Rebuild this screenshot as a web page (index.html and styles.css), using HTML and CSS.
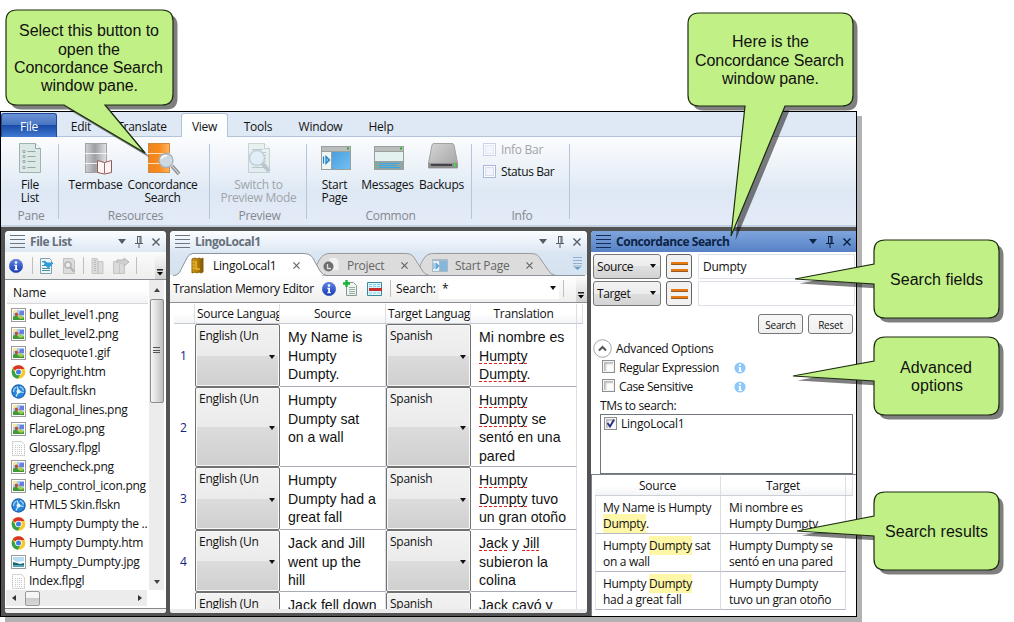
FILE: index.html
```html
<!DOCTYPE html>
<html lang="en">
<head>
<meta charset="utf-8">
<title>Lingo</title>
<link rel="stylesheet" href="styles.css">
</head>
<body>
<svg class="defs" width="0" height="0" aria-hidden="true">
  <defs>
    <linearGradient id="gray" x1="0" x2="1"><stop offset="0" stop-color="#d2d2d5"/><stop offset=".45" stop-color="#9d9ea4"/><stop offset="1" stop-color="#e2e2e6"/></linearGradient>
    <linearGradient id="orange" x1="0" x2="1"><stop offset="0" stop-color="#ee8420"/><stop offset=".5" stop-color="#f98a1c"/><stop offset="1" stop-color="#ffb45e"/></linearGradient>
    <linearGradient id="sky" x1="0" y1="0" x2="1" y2="1"><stop offset="0" stop-color="#4a9fdc"/><stop offset="1" stop-color="#72c0f2"/></linearGradient>
    <linearGradient id="metal" x1="0" x2="1" y2="1"><stop offset="0" stop-color="#d6d6d6"/><stop offset="1" stop-color="#a2a2a2"/></linearGradient>
    <linearGradient id="ball" x1="0" y1="0" x2="0" y2="1"><stop offset="0" stop-color="#5f86e6"/><stop offset="1" stop-color="#1838b0"/></linearGradient>
    <linearGradient id="gold" x1="0" x2="1"><stop offset="0" stop-color="#d09a1a"/><stop offset=".5" stop-color="#b57d0c"/><stop offset="1" stop-color="#7d5306"/></linearGradient>
    <symbol id="pic" viewBox="0 0 15 14"><rect x=".5" y=".5" width="14" height="13" fill="#fff" stroke="#9b9b9b"/><rect x="2" y="2" width="11" height="10" fill="#a9cdf5"/><path d="M2 2h4v3H2z" fill="#f5e9a0"/><path d="M9 3h4v4H8z" fill="#6a7ee0"/><path d="M2 12V9l3-2 3 3 5-1v3z" fill="#3f9a35"/><path d="M4 5l2-.5 1.500 2-1.500 2-2-1z" fill="#c4502a"/><path d="M7 8l3-1 3 3-4 1z" fill="#a5cf3f"/></symbol>
    <symbol id="photo" viewBox="0 0 15 14"><rect x=".5" y=".5" width="14" height="13" fill="#fff" stroke="#9b9b9b"/><rect x="2" y="2" width="11" height="10" fill="#b9dcf5"/><path d="M2 5l4 2 7-1v3H2z" fill="#fff"/><path d="M2 7l4 1 3 1 4-1v2H2z" fill="#22676b"/><path d="M2 10h11v2H2z" fill="#4aa5bd"/></symbol>
    <symbol id="chrome" viewBox="0 0 14 14"><circle cx="7" cy="7" r="6.8" fill="#f7c928"/><path d="M7 7L1.100 3.600A6.800 6.800 0 0 1 13 4H7z" fill="#d93427"/><path d="M1.100 3.600A6.800 6.800 0 0 0 6.200 13.800L9.500 8.500 4.200 8.400z" fill="#2fa34a"/><circle cx="7" cy="7" r="3.300" fill="#fff"/><circle cx="7" cy="7" r="2.500" fill="#3f7de0"/></symbol>
    <symbol id="skin" viewBox="0 0 15 15"><circle cx="7.500" cy="7.500" r="7.200" fill="#1c62b5"/><circle cx="7.500" cy="7.500" r="6" fill="#2a86d8"/><path d="M6 2.500l1.500 4M7.500 7.500l5 1M7.500 7.500L5 12.500" stroke="#d5efff" stroke-width="1.200"/><circle cx="7.500" cy="7.500" r="2" fill="#e8f7ff"/><path d="M2.500 8A5.200 5.200 0 0 1 5 3.300M9 2.700a5 5 0 0 1 3.500 4" stroke="#9bd3f8" stroke-width="1.300" fill="none"/></symbol>
    <symbol id="blank" viewBox="0 0 13 15"><path d="M.5.5h9l3 3v11H.5z" fill="#fdfdfd" stroke="#aaa" stroke-dasharray="1 1"/><path d="M3 4.500h7M3 6.500h7M3 8.500h7M3 10.500h7M3 12.500h7" stroke="#c9c9c9" stroke-dasharray="1 1"/></symbol>
    <symbol id="info" viewBox="0 0 14 14"><circle cx="7" cy="7" r="6.700" fill="url(#ball)" stroke="#3f5fc0" stroke-width=".6"/><circle cx="7" cy="3.500" r="1.300" fill="#fff"/><path d="M5.200 5.800h2.800v4.500h1v1H5.200v-1h1V6.800h-1z" fill="#fff"/></symbol>
    <symbol id="hint" viewBox="0 0 12 12"><circle cx="6" cy="6" r="5.600" fill="#8cc8fb"/><path d="M5 2h2v1.700H5zM4.500 5H7v4h1v1H4.500V9H5V6h-.5z" fill="#fff"/></symbol>
    <symbol id="pin" viewBox="0 0 8 12"><path d="M2 .5h4M2.500 0v7M5 0v7M6 0v7M0 7.500h8M4 8v4" fill="none" stroke="currentColor"/></symbol>
    <symbol id="close" viewBox="0 0 8 8"><path d="M.5.5l7 7M7.500.5l-7 7" stroke="currentColor" stroke-width="1.400"/></symbol>
    <symbol id="overflow" viewBox="0 0 6 7"><path d="M0 .8h6" stroke="#000" stroke-width="1.300"/><path d="M0 3h6L3 6.500z" fill="#000"/></symbol>
    <symbol id="doc" viewBox="0 0 22 30"><path d="M.5.5h16l5 5v24H.5z" fill="#dce8e5" stroke="#9db3af"/><path d="M16.500.5v5h5" fill="#fff" stroke="#8da5a1"/></symbol>
  </defs>
</svg>

<div class="stage">
<main class="window">
  <nav class="tabs">
    <span class="tab file">File</span><span class="tab edit">Edit</span><span class="tab translate">Translate</span><span class="tab view">View</span><span class="tab tools">Tools</span><span class="tab win">Window</span><span class="tab help">Help</span>
  </nav>
  <section class="ribbon">
    <div class="group g-pane">
      <div class="cmds">
        <div class="cmd"><svg width="22" height="30"><use href="#doc" width="22" height="30"/><path d="M8.500 8.500h8M8.500 13.500h8M8.500 18.500h8M8.500 24.500h8" stroke="#93a8a4"/><path d="M4 7.500h2v2H4zM4 12.500h2v2H4zM4 17.500h2v2H4zM4 23.500h2v2H4z" fill="#fff" stroke="#93a8a4"/></svg><span>File<br>List</span></div>
      </div><div class="glabel">Pane</div>
    </div>
    <div class="group g-res">
      <div class="cmds">
        <div class="cmd c-term"><svg width="28" height="32"><rect x=".5" y=".5" width="21" height="29" fill="url(#gray)" stroke="#a3a3a8"/><path d="M0 10.500h22M0 20.500h22" stroke="#f2f2f2"/><path d="M12.500 17.500l7 2 7-2v12l-7 1.500-7-1.500z" fill="#fbf4f2" stroke="#8f5c56"/><path d="M19.500 19.500v11" stroke="#a66"/></svg><span>Termbase</span></div>
        <div class="cmd c-conc"><svg width="33" height="32"><rect x=".5" y=".5" width="21" height="29" fill="url(#orange)" stroke="#d08a40"/><path d="M0 10.500h22M0 20.500h22" stroke="#ffe0b8"/><path d="M24 23l7 8" stroke="#85878a" stroke-width="3.500"/><path d="M24 23l7 8" stroke="#c9cbcd" stroke-width="1.500"/><circle cx="18" cy="17.500" r="7" fill="#c9dced" fill-opacity=".92" stroke="#a8aeb5" stroke-width="1.300"/><path d="M13 16q2-4 6-3" stroke="#fff" fill="none" stroke-width="1.500"/></svg><span>Concordance<br>Search</span></div>
      </div><div class="glabel">Resources</div>
    </div>
    <div class="group g-prev">
      <div class="cmds">
        <div class="cmd off"><svg width="22" height="30"><g opacity=".5"><use href="#doc" width="22" height="30"/><path d="M4 6.500h11M4 9.500h14M4 12.500h14M4 15.500h14M4 18.500h14M4 21.500h14M4 24.500h14" stroke="#849b97"/><path d="M14 20l7 8" stroke="#8a98a5" stroke-width="4"/><circle cx="9" cy="15" r="7.500" fill="#d5e8f4" stroke="#8fa9bd" stroke-width="1.500"/></g></svg><span>Switch to<br>Preview Mode</span></div>
      </div><div class="glabel">Preview</div>
    </div>
    <div class="group g-com">
      <div class="cmds">
        <div class="cmd c-start"><svg width="30" height="30"><rect x="0" y="3" width="30" height="24" fill="#9ba09e"/><rect x="1" y="4" width="28" height="4" fill="#b9bdbb"/><path d="M26 4.500h2v2h-2z" fill="#20b020"/><path d="M1 9h9v17H1z" fill="#edf5f5"/><path d="M11 9h18v17H11z" fill="url(#sky)"/><path d="M2.500 13.500v7M5 13.500l3.500 3.500L5 20.500z" stroke="#2180c5" stroke-width="1.300" fill="#8ccdf4"/></svg><span>Start<br>Page</span></div>
        <div class="cmd c-msg"><svg width="30" height="30"><rect x="0" y="3" width="30" height="24" fill="#9ba09e"/><rect x="1" y="4" width="28" height="4" fill="#b9bdbb"/><path d="M26 4.500h2v2h-2z" fill="#20b020"/><path d="M1 9h28v9H1z" fill="#e3f1ef"/><path d="M1 19h28v7H1z" fill="#8da6a5"/><path d="M5 20.500h20M5 22.500h17M5 24.500h21" stroke="#35a8e5"/><path d="M2 20h1v1H2zM2 22h1v1H2zM2 24h1v1H2z" fill="#40d840"/></svg><span>Messages</span></div>
        <div class="cmd c-back"><svg width="30" height="30"><path d="M6 .5h18q1.500 0 2 1.500l3.500 18v5H.5v-5L4 2q.5-1.500 2-1.500z" fill="url(#metal)" stroke="#a2a2a2"/><path d="M.5 20h29v5H.5z" fill="#8e8e8e"/><path d="M3 21h21v2H3z" fill="#47424b"/><path d="M26 20.500h1.500v3.500H26z" fill="#2cf22c"/></svg><span>Backups</span></div>
      </div><div class="glabel">Common</div>
    </div>
    <div class="group g-info">
      <div class="checks"><label class="off"><i class="rbox"></i>Info Bar</label><label><i class="rbox"></i>Status Bar</label></div>
      <div class="glabel">Info</div>
    </div>
  </section>

  <div class="work">
    <section class="panel files">
      <header class="phead"><i class="grip"></i><b>File List</b><i class="tri"></i><svg class="pin" width="8" height="12"><use href="#pin"/></svg><svg class="x" width="8" height="8"><use href="#close"/></svg></header>
      <div class="ftools">
        <svg width="14" height="14"><use href="#info"/></svg><i class="sep s1"></i>
        <svg width="15" height="16"><path d="M1.500.5h9l2 2v13h-11z" fill="#eef5f5" stroke="#7ba2b0"/><path d="M3 7.500h7M3 10.500h8M3 12.500h8" stroke="#4d8fa8"/><path d="M3 3.500q4-1 5 1.500h6l-4.500 5L5 6h2Q6 4 3 3.500z" fill="#2f9bdb" stroke="#2f9bdb"/></svg>
        <svg class="g2" width="14" height="16"><path d="M1.500.5h9l2 2v13h-11z" fill="#dcdcdc" stroke="#c2c2c2"/><circle cx="6" cy="7" r="3" fill="#eee" stroke="#b4b4b4" stroke-width="1.500"/><path d="M8 9l4 4.500" stroke="#b4b4b4" stroke-width="2"/></svg><i class="sep s2"></i>
        <svg class="g3" width="14" height="16"><path d="M1 .5h5l1 2v13H1zM7 3.500h5v12H7z" fill="#dcdcdc" stroke="#c6c6c6"/><path d="M4 2v12" stroke="#b8b8b8" stroke-dasharray="1 1" stroke-width="2"/></svg>
        <svg class="g4" width="17" height="16"><path d="M.5 3.500h6v12h-6zM6.500 5.500h5v10h-5z" fill="#dadada" stroke="#c4c4c4"/><path d="M4 5V2h7V0l5 4-5 4V6" fill="#cfcfcf" stroke="#b5b5b5"/></svg><i class="sep s3"></i>
        <span class="more"><svg width="6" height="7"><use href="#overflow"/></svg></span>
      </div>
      <div class="fbody">
        <div class="list">
          <div class="lhead">Name</div>
          <ul>
            <li><svg width="15" height="14"><use href="#pic"/></svg>bullet_level1.png</li>
            <li><svg width="15" height="14"><use href="#pic"/></svg>bullet_level2.png</li>
            <li><svg width="15" height="14"><use href="#pic"/></svg>closequote1.gif</li>
            <li><svg width="15" height="14"><use href="#chrome"/></svg>Copyright.htm</li>
            <li><svg width="15" height="15"><use href="#skin"/></svg>Default.flskn</li>
            <li><svg width="15" height="14"><use href="#pic"/></svg>diagonal_lines.png</li>
            <li><svg width="15" height="14"><use href="#pic"/></svg>FlareLogo.png</li>
            <li><svg width="15" height="15"><use href="#blank"/></svg>Glossary.flpgl</li>
            <li><svg width="15" height="14"><use href="#pic"/></svg>greencheck.png</li>
            <li><svg width="15" height="14"><use href="#pic"/></svg>help_control_icon.png</li>
            <li><svg width="15" height="15"><use href="#skin"/></svg>HTML5 Skin.flskn</li>
            <li><svg width="15" height="14"><use href="#chrome"/></svg>Humpty Dumpty the ..</li>
            <li><svg width="15" height="14"><use href="#chrome"/></svg>Humpty Dumpty.htm</li>
            <li><svg width="15" height="14"><use href="#photo"/></svg>Humpty_Dumpty.jpg</li>
            <li><svg width="15" height="15"><use href="#blank"/></svg>Index.flpgl</li>
          </ul>
        </div>
        <div class="vbar"><i class="au"></i><i class="thumb"></i><i class="ad"></i></div>
        <div class="hbar"><i class="al"></i><i class="hthumb"></i><i class="ar"></i></div>
      </div>
    </section>

    <section class="panel editor">
      <header class="phead"><i class="grip"></i><b>LingoLocal1</b><i class="tri"></i><svg class="pin" width="8" height="12"><use href="#pin"/></svg><svg class="x" width="8" height="8"><use href="#close"/></svg></header>
      <div class="dtabs">
        <svg class="tabshape" width="412" height="23"><path d="M251.500 22.500c-4-4-6-8-3-13 3-6 6-9 12-9h97q7 0 9 4l9 13q2 4 7 5z" fill="#dcdcdc" stroke="#999"/><path d="M149 22.500c-5-4-7-8-4-13 3-6 6-9 12-9h75q7 0 9 4l9 14q2 3 6 4z" fill="#dcdcdc" stroke="#999"/><path d="M0 22.500h1q5-1 7-6L14 5q2-4.500 6-4.500h110q7 0 9.500 4L147 18q3 4.500 7 4.500z" fill="#fff"/><path d="M0 22.500q6 0 8-6L14 5q2-4.500 6-4.500h110q7 0 9.500 4L147 18q3 4.500 7 4.500h258" fill="none" stroke="#8d949c"/></svg>
        <div class="dt d1"><svg width="14" height="17"><path d="M1 2l3-1 2 1 2-1 2 1 2-1v14l-2 1-2-1-2 1-2-1-3 1z" fill="url(#gold)" stroke="#8d6309"/><path d="M5 4v8h4M1.500 5h2M1.500 8h2M1.500 11h2" stroke="#e8b82c" fill="none" stroke-width="1.500"/></svg><span>LingoLocal1</span><svg class="dx" width="7" height="7" viewBox="0 0 8 8"><use href="#close" width="8" height="8"/></svg></div>
        <div class="dt d2"><svg width="18" height="16"><path d="M6 .5h7l3 3v10H6z" fill="#f1f1f1" stroke="#ddd"/><circle cx="5.500" cy="9.500" r="5" fill="#6d6d6d"/><path d="M4.500 7v4.500H8" stroke="#ddd" fill="none" stroke-width="1.300"/></svg><span>Project</span><svg class="dx" width="7" height="7" viewBox="0 0 8 8"><use href="#close" width="8" height="8"/></svg></div>
        <div class="dt d3"><svg width="16" height="13"><path d="M0 0h16v13H0z" fill="#aabac4"/><path d="M1 2h6v10H1z" fill="#e0edf4"/><path d="M8 2h7v10H8z" fill="#83b8dc"/><path d="M2 4v6M4 4l3 3-3 3z" fill="#61a8db" stroke="#61a8db"/></svg><span>Start Page</span><svg class="dx" width="7" height="7" viewBox="0 0 8 8"><use href="#close" width="8" height="8"/></svg></div>
        <svg class="dmore" width="15" height="21"><path d="M0 0h15v21H0z" fill="#d6e5f2"/><path d="M3 4.500h9M3 7.500h9M3 10.500h9M3 13h9" stroke="#92afd0"/><path d="M4 14h7l-3.500 3z" fill="#739bc7"/></svg>
      </div>
      <div class="etools">
        <span class="etitle">Translation Memory Editor</span>
        <svg width="14" height="14"><use href="#info"/></svg>
        <svg class="eadd" width="15" height="17"><path d="M3.500 2.500h7l3 3v10h-10z" fill="#edf4ef" stroke="#8a9992"/><path d="M6 7.500h6M6 9.500h6M6 11.500h6M6 13.500h6" stroke="#9daca5"/><path d="M0 3.500h7M3.500 0v7" stroke="#19b337" stroke-width="2.300"/></svg>
        <svg class="edel" width="15" height="14"><path d="M.5.5h14v13H.5z" fill="#def4fa" stroke="#3b8998"/><path d="M2 2.500h11M2 4.500h11M2 11h11" stroke="#7ed2e8" stroke-dasharray="3 1"/><path d="M2 7.500h13" stroke="#c72f2c" stroke-width="3"/></svg>
        <i class="sep"></i><span class="esearch">Search:</span><span class="ebox">*<i class="arr"></i></span><i class="sep s5"></i>
        <span class="more"><svg width="6" height="7"><use href="#overflow"/></svg></span>
      </div>
      <div class="grid">
        <div class="gr gh"><span></span><span>Source Languag</span><span>Source</span><span>Target Languag</span><span>Translation</span><span></span></div>
        <div class="gr r1"><span class="num">1</span><span class="cb">English (Un<i class="arr"></i></span><p>My Name is<br>Humpty<br>Dumpty.</p><span class="cb">Spanish<i class="arr"></i></span><p>Mi nombre es<br><u>Humpty</u><br><u>Dumpty</u>.</p></div>
        <div class="gr r2"><span class="num">2</span><span class="cb">English (Un<i class="arr"></i></span><p>Humpty<br>Dumpty sat<br>on a wall</p><span class="cb">Spanish<i class="arr"></i></span><p><u>Humpty</u><br><u>Dumpty</u> se<br>sentó en una<br>pared</p></div>
        <div class="gr r3"><span class="num">3</span><span class="cb">English (Un<i class="arr"></i></span><p>Humpty<br>Dumpty had a<br>great fall</p><span class="cb">Spanish<i class="arr"></i></span><p><u>Humpty</u><br><u>Dumpty</u> tuvo<br>un gran otoño</p></div>
        <div class="gr r4"><span class="num">4</span><span class="cb">English (Un<i class="arr"></i></span><p>Jack and Jill<br>went up the<br>hill</p><span class="cb">Spanish<i class="arr"></i></span><p><u>Jack</u> y <u>Jill</u><br>subieron la<br>colina</p></div>
        <div class="gr r5"><span class="num"></span><span class="cb">English (Un</span><p>Jack fell down</p><span class="cb">Spanish</span><p>Jack cayó y</p></div>
      </div>
    </section>

    <section class="panel conc">
      <header class="phead"><i class="grip"></i><b>Concordance Search</b><i class="tri"></i><svg class="pin" width="8" height="12"><use href="#pin"/></svg><svg class="x" width="8" height="8"><use href="#close"/></svg></header>
      <div class="fields">
        <span class="drop">Source<i class="arr"></i></span><span class="eq"><i></i></span><span class="inp">Dumpty</span>
        <span class="drop">Target<i class="arr"></i></span><span class="eq"><i></i></span><span class="inp"></span>
      </div>
      <div class="btns"><span>Search</span><span>Reset</span></div>
      <div class="adv"><svg width="19" height="19"><circle cx="9.500" cy="9.500" r="8.800" fill="#fff" stroke="#a5a5a5"/><path d="M6 11.500L9.500 8l3.500 3.500" fill="none" stroke="#555" stroke-width="2"/></svg>Advanced Options</div>
      <div class="opt"><i class="box"></i><span>Regular Expression</span><svg width="12" height="12"><use href="#hint"/></svg></div>
      <div class="opt"><i class="box"></i><span>Case Sensitive</span><svg width="12" height="12"><use href="#hint"/></svg></div>
      <div class="tml">TMs to search:</div>
      <div class="tms"><i class="box"><svg width="9" height="9"><path d="M1.500 4L4 7.500 8 .8" fill="none" stroke="#2b2f86" stroke-width="2"/></svg></i><span>LingoLocal1</span></div>
      <div class="results">
        <div class="rr rh"><span>Source</span><span>Target</span><span></span></div>
        <div class="rr"><p>My Name is Humpty<br><mark>Dumpty</mark>.</p><p>Mi nombre es<br>Humpty Dumpty.</p></div>
        <div class="rr"><p>Humpty <mark>Dumpty</mark> sat<br>on a wall</p><p>Humpty Dumpty se<br>sentó en una pared</p></div>
        <div class="rr"><p>Humpty <mark>Dumpty</mark><br>had a great fall</p><p>Humpty Dumpty<br>tuvo un gran otoño</p></div>
      </div>
    </section>
  </div>
</main>
<i class="shade right"></i><i class="shade bottom"></i>

<svg class="callouts" width="1014" height="622">
  <g class="cshadow" transform="translate(4.500 4.500)">
    <path d="M17 10H162Q173 10 173 21V94Q173 105 162 105H105L145 153L64 105H17Q6 105 6 94V21Q6 10 17 10Z"/>
    <path d="M699 13H842Q853 13 853 24V95Q853 106 842 106H785L731 236L745 106H699Q688 106 688 95V24Q688 13 699 13Z"/>
    <path d="M885 240H988Q999 240 999 251V307Q999 318 988 318H885Q874 318 874 307V284L795 279L874 264V251Q874 240 885 240Z"/>
    <path d="M885 337H988Q999 337 999 348V404Q999 415 988 415H885Q874 415 874 404V381L793 376L874 361V348Q874 337 885 337Z"/>
    <path d="M885 492H988Q999 492 999 503V559Q999 570 988 570H885Q874 570 874 559V536L797 531L874 516V503Q874 492 885 492Z"/>
  </g>
  <g class="cbody">
    <path d="M17 10H162Q173 10 173 21V94Q173 105 162 105H105L145 153L64 105H17Q6 105 6 94V21Q6 10 17 10Z"/>
    <path d="M699 13H842Q853 13 853 24V95Q853 106 842 106H785L731 236L745 106H699Q688 106 688 95V24Q688 13 699 13Z"/>
    <path d="M885 240H988Q999 240 999 251V307Q999 318 988 318H885Q874 318 874 307V284L795 279L874 264V251Q874 240 885 240Z"/>
    <path d="M885 337H988Q999 337 999 348V404Q999 415 988 415H885Q874 415 874 404V381L793 376L874 361V348Q874 337 885 337Z"/>
    <path d="M885 492H988Q999 492 999 503V559Q999 570 988 570H885Q874 570 874 559V536L797 531L874 516V503Q874 492 885 492Z"/>
  </g>
  <g class="ctext">
    <text x="19" y="36" textLength="140">Select this button to</text>
    <text x="58" y="55" textLength="62">open the</text>
    <text x="14" y="73" textLength="149">Concordance Search</text>
    <text x="41" y="91" textLength="97">window pane.</text>
    <text x="732" y="47" textLength="77">Here is the</text>
    <text x="695" y="66" textLength="149">Concordance Search</text>
    <text x="722" y="84" textLength="97">window pane.</text>
    <text x="890" y="285" textLength="93">Search fields</text>
    <text x="900" y="373" textLength="72">Advanced</text>
    <text x="911" y="391" textLength="52">options</text>
    <text x="885" y="537" textLength="103">Search results</text>
  </g>
</svg>
</div>
</body>
</html>
```
FILE: styles.css
```css
* { box-sizing: border-box; }
body { margin: 0; background: #fff; }
.defs { position: absolute; }
svg { display: block; flex: none; overflow: visible; }
p, ul { margin: 0; padding: 0; list-style: none; }
i { font-style: normal; }
.stage { position: relative; width: 1014px; height: 622px; padding-top: 111px; overflow: hidden; font: 12px/13px "Open Sans", "Noto Sans", sans-serif; letter-spacing: -.25px; color: #111; }
.window { width: 857px; height: 506px; border: 1px solid #000; background: #535353; display: flex; flex-direction: column; }
.shade { position: absolute; background: #b2b2b2; }
.shade.right { left: 857px; top: 116px; width: 5px; height: 506px; }
.shade.bottom { left: 5px; top: 617px; width: 857px; height: 5px; }

.tabs { display: flex; height: 25px; flex: none; background: #dfe9f5; border-bottom: 1px solid #b3c4d8; line-height: 29px; }
.tab { text-align: center; height: 24px; }
.tab.file { width: 56px; margin-top: 1px; color: #fff; background: linear-gradient(#6b93d4 0, #4674c0 48%, #1a4ba8 50%, #3f7bd0); border: 1px solid #1d479a; border-bottom: 0; border-radius: 3px 3px 0 0; line-height: 26px; }
.edit { width: 48px; } .translate { width: 74px; }
.tab.view { width: 47px; height: 25px; margin: 1px 0 0 2px; line-height: 26px; background: linear-gradient(#fff, #fafcfe); border: 1px solid #b3c4d8; border-bottom: 0; border-radius: 3px 3px 0 0; }
.tools { width: 60px; } .win { width: 65px; } .help { width: 56px; }
.ribbon { height: 90px; flex: none; display: flex; padding: 7px 0 0; background: linear-gradient(#fbfcfe 0, #edf3f9 32%, #dee8f4 62%, #e3ebf7); border-bottom: 2px solid #c3d0df; }
.group { height: 75px; border-right: 1px solid #b5c6d8; display: flex; flex-direction: column; }
.g-pane { width: 58px; } .g-res { width: 151px; } .g-prev { width: 97px; } .g-com { width: 165px; } .g-info { width: 98px; }
.cmds { display: flex; height: 65px; justify-content: center; margin-top: -1px; flex: none; }
.cmd { display: flex; flex-direction: column; align-items: center; text-align: center; white-space: nowrap; }
.cmd svg { height: 32px; margin-bottom: 3px; }
.off, .cmd.off { color: #a0a4a8; }
.g-res .cmds { padding-right: 5px; }
.c-term { width: 62px; } .c-term svg { margin-left: 6px; } .c-conc { width: 72px; letter-spacing: -.35px; }
.c-conc svg { margin-left: 3px; }
.g-prev .cmds { padding-left: 1px; }
.g-prev .cmd svg { margin-left: 2px; }
.c-start { width: 50px; } .c-msg { width: 56px; } .c-back { width: 52px; letter-spacing: -.3px; }
.g-com .cmds { padding-right: 1px; }
.g-com .cmd svg { margin-left: 2px; }
.glabel { text-align: center; color: #84888f; margin-top: 1px; }
.g-pane .glabel { padding-left: 3px; } .g-pane .cmds { padding-left: 1px; }
.g-res .glabel { padding-left: 3px; } .g-prev .glabel, .g-com .glabel, .g-info .glabel { padding-left: 3px; }
.checks { height: 64px; padding-left: 11px; flex: none; }
.checks label { display: flex; align-items: center; gap: 5px; height: 13px; margin-bottom: 9px; letter-spacing: -.4px; }
.checks label:first-child { margin-top: -1px; letter-spacing: -.3px; }
.rbox { width: 13px; height: 13px; border: 1px solid #a8b5dc; background: #f3f3fc; box-shadow: inset 0 0 0 1px #fff, inset 0 0 0 2px #d8dcee; }
.off .rbox { opacity: .55; }

.work { display: flex; flex: 1; padding: 4px 0 3px 4px; min-height: 0; }
.panel { display: flex; flex-direction: column; background: #fff; border-radius: 4px 4px 3px 3px; overflow: hidden; flex: none; }
.files { width: 161px; margin-right: 4px; height: 382px; }
.editor { width: 417px; margin-right: 4px; height: 382px; }
.conc { width: 265px; height: 385px; border-radius: 4px 0 0 0; }
.phead { height: 21px; flex: none; display: flex; align-items: center; padding: 0 6px 0 5px; background: linear-gradient(#fbfdff, #dde8f4); color: #565d66; }
.phead b { flex: 1; padding-left: 5px; font-weight: 700; letter-spacing: -.45px; color: #67707a; }
.grip { width: 15px; height: 13px; background: repeating-linear-gradient(#6d747c 0 1px, transparent 1px 4px); }
.tri { border: 4px solid transparent; border-top: 5px solid #555c66; border-bottom: 0; margin-right: 9px; }
.pin { margin-right: 9px; }
.conc .phead { background: linear-gradient(#7fa5dc, #5681c6); color: #061c3c; padding-right: 5px; }
.conc .phead b { color: #0b2344; letter-spacing: -.45px; } .conc .tri { border-top-color: #0b2344; }
.conc .grip { background: repeating-linear-gradient(#132c58 0 1px, transparent 1px 4px); }
.sep { width: 1px; height: 17px; background: #bfbfbf; }
.more { align-self: stretch; width: 11px; margin-left: auto; background: linear-gradient(#fdfdfd, #d2d2d2); display: flex; align-items: flex-end; justify-content: center; padding: 0 2px 3px 0; }

.ftools { height: 28px; flex: none; display: flex; align-items: center; padding-left: 4px; background: linear-gradient(#fafafa, #eee); border-bottom: 1px solid #8a8f96; }
.s1 { margin: 0 6px 0 9px; } .g2 { margin-left: 8px; } .s2 { margin: 0 7px 0 7px; } .g4 { margin-left: 8px; } .s3 { margin-left: 6px; }
.fbody { flex: 1; display: grid; grid-template: 310px 17px / 143px 15px; padding: 0 0 0 1px; border-bottom: 1px solid #888; margin-bottom: 4px; box-shadow: 0 4px 0 #eceeef; }
.list { overflow: hidden; }
.lhead { height: 24px; margin: 0 1px; border-bottom: 1px solid #d8d8d8; padding: 6px 0 0 6px; background: linear-gradient(#fff 40%, #f2f3f5); letter-spacing: -.1px; }
.list ul { padding-top: 1px; }
.list li { height: 19px; display: flex; align-items: center; gap: 3px; padding: 1px 0 0 5px; white-space: nowrap; letter-spacing: -.27px; line-height: 12px; }
.vbar { background: #ececec; display: flex; flex-direction: column; align-items: center; }
.au { border: 3.500px solid transparent; border-bottom: 4px solid #444; border-top: 0; margin: 8px 0 7px; }
.thumb { width: 14px; height: 104px; border: 1px solid #8d8d8d; border-radius: 2px; background: linear-gradient(90deg, #f7f7f7, #d7d7d9 60%, #bbb); display: flex; align-items: center; justify-content: center; }
.thumb::after { content: ""; width: 7px; height: 8px; background: repeating-linear-gradient(#555 0 1px, transparent 1px 2.500px); }
.ad { border: 3.500px solid transparent; border-top: 4px solid #444; border-bottom: 0; margin: auto 0 6px; }
.hbar { height: 16px; background: #ececec; display: flex; align-items: center; margin-right: 2px; }
.al { border: 3.500px solid transparent; border-right: 4px solid #333; border-left: 0; margin: 0 9px 0 6px; }
.hthumb { width: 15px; height: 15px; border: 1px solid #999; border-radius: 2px; background: linear-gradient(#f6f6f6 45%, #ccc 50%, #d8d8d8); }
.ar { border: 3.500px solid transparent; border-left: 4px solid #333; border-right: 0; margin: 0 5px 0 auto; }

.dtabs { position: relative; height: 23px; flex: none; display: flex; background: linear-gradient(#dbe6f3, #d4e1ef); }
.tabshape { position: absolute; left: 3px; top: 1px; }
.dt { position: relative; display: flex; align-items: center; padding-top: 3px; white-space: nowrap; }
.d1 { width: 146px; padding-left: 21px; } .d1 span { padding-left: 8px; width: 85px; }
.d2 { width: 109px; padding-left: 7px; color: #666; } .d2 span { padding-left: 6px; width: 57px; }
.d3 { padding-left: 7px; color: #666; } .d3 span { padding-left: 7px; width: 75px; }
.dx { color: #666; margin-left: 3px; }
.dmore { position: relative; margin: 1px 2px 0 auto; }
.etools { height: 28px; flex: none; display: flex; align-items: center; padding-left: 3px; background: linear-gradient(#fff, #efefef); border-bottom: 1px solid #8a8f96; letter-spacing: -.2px; }
.etools > span { margin-top: -1px; }
.etools > .more { margin-top: 0; }
.etitle { width: 149px; white-space: nowrap; letter-spacing: -.34px; }
.eadd { margin-left: 7px; } .edel { margin-left: 9px; }
.etools .sep { margin: 0 5px 0 8px; } .esearch { width: 43px; }
.ebox { width: 120px; height: 22px; background: #fff; padding: 4px 3px; display: flex; justify-content: space-between; align-items: center; }
.arr { border: 3.500px solid transparent; border-top: 4px solid #111; border-bottom: 0; }
.etools .s5 { margin: 0; margin-left: 4px; }
.grid { height: 306px; overflow: hidden; padding: 1px 4px 0; box-shadow: 0 4px 0 #e9eaeb; }
.gr { display: grid; grid-template-columns: 21px 85px 106px 85px 106px 6px; }
.gh { height: 20px; text-align: center; background: linear-gradient(#fff 50%, #f3f4f6); border-bottom: 1px solid #c8ccd0; }
.gh span { border-right: 1px solid #dcdfe3; padding-top: 3px; white-space: nowrap; overflow: hidden; }
.gh span:nth-child(even) { text-align: left; padding-left: 2px; letter-spacing: -.3px; }
.r1 { height: 63px; } .r2 { height: 80px; } .r3 { height: 63px; } .r4 { height: 62px; } .r5 { height: 63px; }
.num { color: #15267e; align-self: center; padding-left: 6px; }
.cb { border: 1px solid #707070; border-radius: 2px; background: linear-gradient(#f2f2f2, #ebebeb 50%, #dcdcdc 50%, #cfcfcf); box-shadow: inset 0 0 0 1px #f8f8f8; padding: 5px 0 0 3px; position: relative; white-space: nowrap; line-height: 12px; }
.cb .arr { position: absolute; right: 4px; top: 50%; margin-top: -1px; }
.gr p { border-bottom: 1px solid #a8abb5; border-right: 1px solid #dcdfea; padding: 4px 0 0 8px; font: 14.100px/18.700px "Liberation Sans", Arial, sans-serif; letter-spacing: 0; white-space: nowrap; }
.gr u { text-decoration: underline dashed #e02020 1px; text-underline-offset: 2px; text-decoration-skip-ink: none; }

.fields { display: grid; grid-template-columns: 68px 26px 156px; grid-auto-rows: 25px; column-gap: 6px; row-gap: 2px; padding: 2px 0 0 2px; }
.drop { height: 25px; border: 1px solid #777; border-radius: 3px; background: linear-gradient(#f3f3f3, #ececec 50%, #dfdfdf 50%, #d3d3d3); display: flex; align-items: center; justify-content: space-between; padding: 0 4px 1px 3px; letter-spacing: -.4px; }
.eq { border: 1px solid #666; border-radius: 3px; background: #f1f1f1; display: flex; align-items: center; justify-content: center; margin-right: 1px; margin-left: -1px; }
.eq i { width: 17px; height: 9px; border: solid #e57a15; border-width: 2px 0; box-shadow: 0 1px 0 #9a5a20, inset 0 1px 0 #9a5a20; }
.inp { border: 1px solid #dde0ea; padding: 5px 4px; margin-left: -1px; }
.btns { display: flex; gap: 5px; padding: 8px 0 0 167px; }
.btns span { width: 45px; height: 20px; border: 1px solid #777; border-radius: 3px; background: linear-gradient(#f8f8f8, #efefef); text-align: center; font-size: 10px; line-height: 20px; letter-spacing: -.2px; }
.adv { display: flex; align-items: center; gap: 4px; padding: 5px 0 0 2px; letter-spacing: -.3px; }
.opt { display: flex; align-items: center; height: 19px; padding-left: 11px; letter-spacing: -.38px; }
.opt .box { margin-top: -2px; }
.opt span { width: 117px; padding-left: 4px; } .opt svg { margin-left: 2px; margin-top: 1px; }
.box { width: 13px; height: 13px; border: 1px solid #8e8f8f; background: #fff; padding: 1px; box-shadow: inset 0 0 0 1px #f4f4f4, inset 2px 2px 2px 1px #bbb; flex: none; }
.tml { padding: 3px 0 0 9px; height: 18px; letter-spacing: -.35px; }
.tms { width: 253px; height: 60px; margin: 0 0 1px 9px; border: 1px solid #70747c; padding: 2px 3px; display: flex; gap: 4px; }
.results { flex: 1; border-top: 1px solid #7b828c; border-left: 1px solid #7b828c; padding: 1px 0 0 3px; margin-top: -1px; }
.rr { display: grid; grid-template-columns: 126px 125px 7px; height: 38px; }
.rh { height: 20px; text-align: center; background: linear-gradient(#fff 50%, #f3f4f6); border-bottom: 1px solid #cdd0d4; margin-right: 3px; }
.rh span { border-right: 1px solid #dcdfe3; padding-top: 3px; }
.rr p { line-height: 16px; padding: 4px 0 0 7px; border-right: 1px solid #d8dbe4; border-bottom: 1px solid #b5b8c2; border-left: 1px solid #e3e5ec; white-space: nowrap; letter-spacing: -.3px; }
.rr p:nth-child(2) { border-left: 0; padding-left: 8px; }
mark { background: #fff7a8; color: inherit; padding: 1px 0; }

.callouts { position: absolute; left: 0; top: 0; }
.cshadow { fill: #000; fill-opacity: .5; }
.cbody { fill: #c1f086; stroke: #1d2c10; stroke-width: 1.200; }
.ctext { font: 16px "Liberation Sans", Arial, sans-serif; letter-spacing: 0; fill: #111; }
```
